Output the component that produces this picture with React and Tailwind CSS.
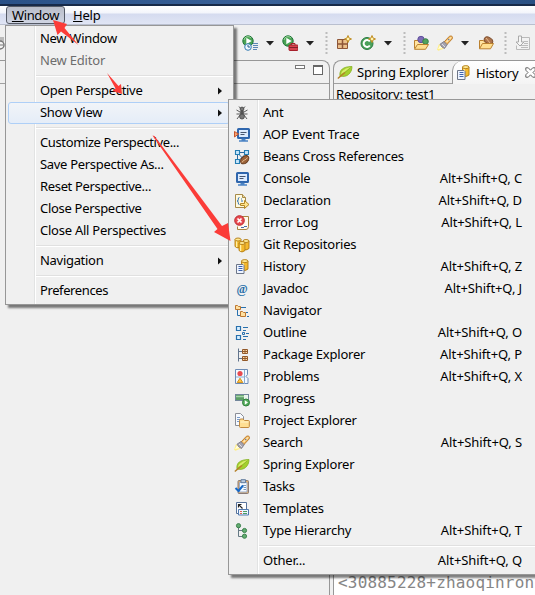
import React from "react";

const UI = "font-['Noto_Sans','Noto_Sans_CJK_SC',sans-serif] text-[13px] leading-[20px] tracking-[-0.2px] text-black";

function Svg({ children, w = 16, h = 16, className = "" }) {
  return (
    <svg width={w} height={h} viewBox={`0 0 ${w} ${h}`} className={`block shrink-0 ${className}`} fill="none">
      {children}
    </svg>
  );
}

function Cylinder({ x, y, w = 6, h = 9 }) {
  return (
    <g stroke="#b17a12" strokeWidth=".9">
      <path d={`M${x} ${y + 1.5}v${h - 3}q${w / 2} 3 ${w} 0v-${h - 3}z`} fill="#f5b92c" />
      <path d={`M${x + 1.6} ${y + 3}v${h - 4}`} stroke="#fff0a8" strokeWidth="1.3" />
      <ellipse cx={x + w / 2} cy={y + 1.5} rx={w / 2} ry="1.5" fill="#ffe993" />
    </g>
  );
}

function Leaf() {
  return (
    <Svg>
      <path d="M3 12C2 6 6 2.5 15 2.5 15 9 10 14 3 12Z" fill="#a4d02e" stroke="#86b326" strokeWidth=".8" />
      <path d="M4 10C5 6 9 4 14 3 11 6 7 8 4 10Z" fill="#d8ee6c" />
      <path d="M.8 14.5C3 12.500 5 11 8 8.500" stroke="#b5802a" strokeWidth="1.3" />
      <path d="M8 8.500 13.500 3.500" stroke="#86b326" strokeWidth=".8" />
    </Svg>
  );
}

function HistoryIcon() {
  return (
    <Svg>
      <Cylinder x={7.5} y={.6} w={6.5} h={11} />
      <path d="M2.5 5.5h6.500l1 1v8h-7.500z" fill="#eef4ff" stroke="#6d7688" />
      <path d="M4.500 7.500h4M4.500 9.500h4M4.500 11.500h4" stroke="#3c62ad" />
    </Svg>
  );
}

function Torch() {
  return (
    <Svg>
      <path d="M0 14.800 2 9l5 4.500-5.500 2.200z" fill="#ffee88" />
      <path d="M1 14 3 10.500 6 13z" fill="#fffce0" />
      <path d="m7 7 5.500-5.800q2-.6 2.700.4t-.2 2.500L9.500 10z" fill="#f5bd66" stroke="#bd7d2e" strokeWidth="1" />
      <path d="m9.500 7 4.700-4.700" stroke="#ffe9b8" strokeWidth="1.200" />
      <path d="M3 9.200 7 6.500l3.200 3.200L7.500 13.500q-3-1-4.500-4.300Z" fill="#a5a3ae" stroke="#777582" strokeWidth=".8" />
      <path d="m5 9 3 3" stroke="#dedee6" />
      <circle cx="11.700" cy="4.600" r=".8" fill="#7280a0" />
    </Svg>
  );
}

function Monitor({ ox = 0 }) {
  return (
    <g transform={`translate(${ox} 0)`}>
      <rect x="2" y="2" width="11" height="9" rx=".5" fill="#dcebff" stroke="#2f66ad" strokeWidth="2" />
      <path d="M4.500 5.500h6M4.500 7.500h4" stroke="#47566f" />
      <path d="M5.500 12.500h4M3 14h9" stroke="#4b83c4" strokeWidth="1.300" />
    </g>
  );
}

const icons = {
  ant: (
    <Svg>
      <g stroke="#4b4b4b" strokeWidth=".9">
        <path d="M5 1.500 7 4M11 1.500 9 4M2.500 5 6 7M13.500 5 10 7M2.500 9h11M3 14l3-4M13 14l-3-4" />
        <circle cx="8" cy="4" r="1.900" fill="#777" />
        <ellipse cx="8" cy="7.500" rx="1.600" ry="1.800" fill="#555" />
        <ellipse cx="8" cy="11.500" rx="2.400" ry="2.500" fill="#777" />
      </g>
    </Svg>
  ),
  aop: (
    <Svg>
      <Monitor ox={2} />
      <path d="M.5 4.500 4.500 7 .5 10z" fill="#f5a275" stroke="#c9562a" />
    </Svg>
  ),
  beans: (
    <Svg>
      <path d="M6 3.500h4M3.500 6v4M12.500 6v3M5.500 6l5 5M10.500 6l-5 5" stroke="#2e6a9e" />
      <g fill="#c7e6fb" stroke="#247db3" strokeWidth="1.100">
        <path d="M1.500 1.500h4v4h-4zM10.500 1.500h4v4h-4zM1.500 10.500h4v4h-4z" />
      </g>
      <ellipse cx="10.700" cy="10.700" rx="4.800" ry="3.300" transform="rotate(-45 10.700 10.700)" fill="#9b6238" stroke="#64391c" />
      <path d="M8 13.500c1-3 4-2 5.500-5" stroke="#e3b88c" />
    </Svg>
  ),
  console: (
    <Svg>
      <Monitor ox={1} />
    </Svg>
  ),
  declaration: (
    <Svg>
      <path d="M1.500 1.500h7l3 3v10h-10z" fill="#fff9df" stroke="#a68a49" />
      <path d="M8.500 1.500v3h3" fill="#ead59c" stroke="#a68a49" />
      <path d="M5.500 4.500q-1.500 0-1.200 1.700T3 8q1.500 0 1.300 1.800t1.200 1.700M7 8h2M7 6h1" stroke="#3574b5" />
      <path d="M6.500 10.500h4v-3l4.500 4-4.500 4v-3h-4z" fill="#ffe48c" stroke="#b38727" />
    </Svg>
  ),
  error: (
    <Svg>
      <path d="M8 1.500h6.500v10q0 3-2.500 3H3.500v-3" fill="#fffbed" stroke="#a98340" />
      <path d="M10 11.500h3M7 12.500h3" stroke="#476eae" />
      <circle cx="5.500" cy="5.500" r="4.800" fill="#e84b50" stroke="#ba2930" />
      <path d="m3.500 3.500 4 4m0-4-4 4" stroke="#fff" strokeWidth="1.700" />
    </Svg>
  ),
  git: (
    <Svg>
      <Cylinder x={1} y={1} w={6} h={10} />
      <Cylinder x={9} y={2.500} w={6} h={10.500} />
      <Cylinder x={5} y={4.500} w={6} h={10.500} />
    </Svg>
  ),
  history: <HistoryIcon />,
  javadoc: (
    <Svg>
      <text x="8" y="11.500" textAnchor="middle" fontSize="12" fontWeight="bold" fontFamily="Liberation Serif, serif" fill="#286fa9">@</text>
    </Svg>
  ),
  navigator: (
    <Svg>
      <path d="M3.500 6v6.500H6M7 4.500h5" stroke="#2870ad" />
      <path d="M9 4.500h3M12 9.500h2M13 13.500h2" stroke="#2870ad" strokeWidth="1.200" />
      <path d="M1.500 2.500h2l1 1h2v3h-5zM6.500 8.500h2l1 1h2v4h-5z" fill="#ffe0a0" stroke="#bd7730" />
    </Svg>
  ),
  outline: (
    <Svg>
      <path d="M2.500 1.500h4v4h-4zM2.500 10.500h4v4h-4z" fill="#d8efff" stroke="#2870ad" strokeWidth="1.200" />
      <path d="M9 2.500h5M9 5.500h3M9 11.500h5M9 14.500h3M12 8.500h3" stroke="#2870ad" strokeWidth="1.200" />
      <path d="M8.500 7.500h2v2h-2z" stroke="#2870ad" />
    </Svg>
  ),
  package: (
    <Svg>
      <path d="M4.500 1.500v13M4.500 4.500H8M4.500 11.500H8" stroke="#62748c" />
      <g fill="#fbd9a6" stroke="#925829">
        <path d="M8.500 2.500h5v4h-5zM8.500 9.500h5v4h-5zM11 2v5M8 4.500h6M11 9v5M8 11.500h6" />
      </g>
    </Svg>
  ),
  problems: (
    <Svg>
      <path d="M1.500.5h12v5l-1.500 2 2 2v5H1.500z" fill="#f4f9ff" stroke="#6c8bb5" />
      <path d="M10.500 1v14M2 8h8" stroke="#8bacd0" />
      <circle cx="6" cy="4.500" r="2.600" fill="#e94a4f" />
      <path d="m6 9.200 2.800 4.300H3.200z" fill="#ffc443" stroke="#d09121" />
    </Svg>
  ),
  progress: (
    <Svg>
      <rect x="1.500" y="3.500" width="13" height="6" fill="#e9f4eb" stroke="#72869b" />
      <path d="M2 4h8v5H2z" fill="#5b9e64" />
      <path d="M2 5.500h8" stroke="#a7d3a9" strokeWidth="1.500" />
      <circle cx="12" cy="11.500" r="3.500" fill="#53aa5b" stroke="#2f803b" />
      <path d="m10.800 9.200 3.200 2.300-3.200 2.300z" fill="#fff" />
    </Svg>
  ),
  project: (
    <Svg>
      <path d="M1.500.5h5l3 3v9h-8z" fill="#f7faff" stroke="#8b8e97" />
      <path d="M3 4.500h3M3 6.500h3M3 8.500h2" stroke="#799bca" />
      <path d="M5.500 7.500q0-1.500 1.500-1.500h2l1.500 1.500h4q.8 0 .8.800v5.200q0 1-1 1H6.500q-1 0-1-1z" fill="#ffdf93" stroke="#c28a3e" />
      <path d="M6.500 9h8" stroke="#fff4ca" />
    </Svg>
  ),
  search: <Torch />,
  spring: <Leaf />,
  tasks: (
    <Svg>
      <rect x="4" y="1.500" width="10.500" height="13" rx="1" fill="#dcae70" stroke="#8a7b77" />
      <path d="M5.500 3.500h7.500v9.500H5.500z" fill="#f6faff" stroke="#9babc7" />
      <path d="M7 .7h4.500v3H7z" fill="#b9cadf" stroke="#637d9d" />
      <path d="M8.500 6.500h3.500M9.500 8.500H12M9.500 10.500H12" stroke="#7998bb" />
      <path d="m1.500 9 3 3L9 6.500" stroke="#1668c7" strokeWidth="2" />
    </Svg>
  ),
  templates: (
    <Svg>
      <path d="M2.500 1.500h10v11h-10z" fill="#fff" stroke="#57729b" />
      <path d="M4.500 6.500V3.500h3M4.700 3.700l3.800 3.800" stroke="#222" strokeWidth="1.200" />
      <path d="M4.500 8.500h10v5.500h-10z" fill="#eef5ff" stroke="#5078ae" />
      <path d="M6 10.500h2M6 12.500h2" stroke="#e06150" />
      <path d="M9 10.500h4M9 12.500h4" stroke="#4b9d62" />
    </Svg>
  ),
  type: (
    <Svg>
      <path d="M4.500 4v9.500H10M4.500 7.500H10" stroke="#657984" />
      <g fill="#62ac70" stroke="#3c824d">
        <circle cx="4.500" cy="2.700" r="2.100" />
        <circle cx="10.500" cy="7.500" r="2.100" />
        <circle cx="10.500" cy="13.200" r="2.100" />
      </g>
    </Svg>
  ),
};

const views = [
  ["Ant", "ant", ""],
  ["AOP Event Trace", "aop", ""],
  ["Beans Cross References", "beans", ""],
  ["Console", "console", "Alt+Shift+Q, C"],
  ["Declaration", "declaration", "Alt+Shift+Q, D"],
  ["Error Log", "error", "Alt+Shift+Q, L"],
  ["Git Repositories", "git", ""],
  ["History", "history", "Alt+Shift+Q, Z"],
  ["Javadoc", "javadoc", "Alt+Shift+Q, J"],
  ["Navigator", "navigator", ""],
  ["Outline", "outline", "Alt+Shift+Q, O"],
  ["Package Explorer", "package", "Alt+Shift+Q, P"],
  ["Problems", "problems", "Alt+Shift+Q, X"],
  ["Progress", "progress", ""],
  ["Project Explorer", "project", ""],
  ["Search", "search", "Alt+Shift+Q, S"],
  ["Spring Explorer", "spring", ""],
  ["Tasks", "tasks", ""],
  ["Templates", "templates", ""],
  ["Type Hierarchy", "type", "Alt+Shift+Q, T"],
];

function MenuRow({ label, disabled, arrow, active, tracking = "tracking-[-0.3px]" }) {
  return (
    <div className={`ml-[2px] mr-[3px] flex h-[22px] items-center ${active ? "rounded-[3px] border border-[#aecff7] bg-gradient-to-b from-[#f1f4f8] to-[#e5edf8] pl-[31px] pr-[8px]" : "pl-[32px] pr-[9px]"} ${disabled ? "text-[#6d6d6d]" : ""}`}>
      <span className={`grow whitespace-nowrap pb-[2px] ${tracking}`}>{label}</span>
      {arrow && (
        <Svg w={4} h={8} className="mr-[-1px]">
          <path d="M0 .5 4 4 0 7.500z" fill="#111" />
        </Svg>
      )}
    </div>
  );
}

function Separator() {
  return (
    <div className="flex h-2 items-center pl-[30px]">
      <div className="h-[2px] grow border-t border-[#e0e0e0] bg-white" />
    </div>
  );
}

function WindowMenu() {
  return (
    <div className="absolute left-[5px] top-[25px] flex h-[280px] w-[229px] border border-[#979797] bg-[#f0f0f0] shadow-[3px_3px_2px_rgba(0,0,0,0.5)]">
      <div className="flex w-full flex-col bg-[linear-gradient(to_right,transparent_28px,#e2e3e3_28px,#e2e3e3_29px,#fff_29px,#fff_30px,transparent_30px)] pt-[2px]">
        <MenuRow label="New Window" />
        <MenuRow label="New Editor" disabled tracking="tracking-[-0.2px]" />
        <Separator />
        <MenuRow label="Open Perspective" arrow />
        <MenuRow label="Show View" arrow active />
        <Separator />
        <MenuRow label="Customize Perspective..." tracking="tracking-[-0.38px]" />
        <MenuRow label="Save Perspective As..." tracking="tracking-[-0.31px]" />
        <MenuRow label="Reset Perspective..." tracking="tracking-[-0.34px]" />
        <MenuRow label="Close Perspective" />
        <MenuRow label="Close All Perspectives" tracking="tracking-[-0.24px]" />
        <Separator />
        <MenuRow label="Navigation" arrow />
        <Separator />
        <MenuRow label="Preferences" tracking="tracking-[-0.4px]" />
      </div>
    </div>
  );
}

function ViewRow({ label, icon, shortcut }) {
  return (
    <div className="flex h-[22px] items-center pl-[5px] pr-[13px]">
      <div className="w-[29px] shrink-0">{icon}</div>
      <span className="grow whitespace-nowrap pb-[2px]">{label}</span>
      <span className="whitespace-nowrap pb-[2px] tracking-[-0.1px]">{shortcut}</span>
    </div>
  );
}

function ViewMenu() {
  return (
    <div className="absolute left-[228px] top-[99px] h-[476px] w-[307px] border-y border-l border-[#979797] bg-[#f0f0f0] shadow-[3px_3px_2px_rgba(0,0,0,0.5)]">
      <div className="flex h-full flex-col bg-[linear-gradient(to_right,transparent_28px,#e2e3e3_28px,#e2e3e3_29px,#fff_29px,#fff_30px,transparent_30px)] pt-[2px]">
        {views.map(([label, icon, shortcut]) => (
          <ViewRow key={label} label={label} icon={icons[icon]} shortcut={shortcut} />
        ))}
        <Separator />
        <ViewRow label="Other..." shortcut="Alt+Shift+Q, Q" />
      </div>
    </div>
  );
}

function Caret() {
  return (
    <Svg w={8} h={5} className="mt-[6px]">
      <path d="M0 0h8L4 4.500z" fill="#222" />
    </Svg>
  );
}

function Grip() {
  return (
    <Svg w={3} h={22} className="mt-[-3px]">
      <path d="M1.500 0v22" stroke="#bcbcbc" strokeWidth="2" strokeDasharray="2 2" />
    </Svg>
  );
}

function RunBall() {
  return (
    <g>
      <circle cx="6" cy="6" r="5.200" fill="#49a254" stroke="#22763a" />
      <path d="M2 5a4 4 0 0 1 7-2" stroke="#9bd49b" />
      <path d="m4.300 2.700 5.400 3.300-5.400 3.300z" fill="#fff" />
    </g>
  );
}

function Sparkle() {
  return <path d="m12 .5 1 2.500 2.500 1-2.500 1-1 2.500L11 5 8.500 4 11 3z" fill="#fff3b0" stroke="#c08c22" />;
}

function OpenFolder({ children }) {
  return (
    <Svg>
      <path d="M1.500 13.500v-8h4l1 1.500h6v3" fill="#ffe4a2" stroke="#bb812f" />
      {children}
      <path d="M1.500 13.800 4.500 8.500h11l-3 5.300z" fill="#ffdf90" stroke="#bb812f" />
    </Svg>
  );
}

function Toolbar() {
  return (
    <div className="flex h-[35px] shrink-0 items-start bg-[#f0f0f0] pt-[10px]">
      <Svg w={5} h={16}>
        <path d="M0 2h4v5H0z" fill="#bababa" />
        <circle cx="0" cy="10" r="4" fill="#f3f3f3" stroke="#777" strokeWidth="1.500" />
        <path d="M0 10h3" stroke="#777" />
      </Svg>
      <div className="ml-[237px] flex w-[32px] justify-between">
        <Svg>
          <RunBall />
          <circle cx="6" cy="12" r="3.300" fill="#edf6ff" stroke="#347bb1" />
          <path d="M6 10v2h2" stroke="#275d88" />
          <path d="M11 8.500h5M11 10.500h5M11 12.500h5M11 14.500h4" stroke="#5d86b4" />
        </Svg>
        <Caret />
      </div>
      <div className="ml-[8px] flex w-[32px] justify-between">
        <Svg>
          <RunBall />
          <path d="M9 10V8.500h4V10" stroke="#a7202b" />
          <rect x="7" y="10" width="9" height="5.500" rx=".7" fill="#d54550" stroke="#a7202b" />
          <path d="M7 12.500h9" stroke="#84202a" />
        </Svg>
        <Caret />
      </div>
      <div className="ml-[11px]"><Grip /></div>
      <Svg className="ml-[8px]">
        <path d="M1.500 4.500h10v9h-10z" fill="#ecc18c" stroke="#8e5638" />
        <path d="M6.500 4v10M1 9h11" stroke="#8e5638" strokeWidth="1.500" />
        <Sparkle />
      </Svg>
      <div className="ml-[8px] flex w-[32px] justify-between">
        <Svg>
          <circle cx="7" cy="8.500" r="6" fill="#4aa15b" stroke="#2b7b41" />
          <path d="M9.800 6.500a3.400 3.400 0 1 0 0 4" stroke="#fff" strokeWidth="2" />
          <Sparkle />
        </Svg>
        <Caret />
      </div>
      <div className="ml-[11px]"><Grip /></div>
      <Svg className="ml-[7px]">
        <path d="M1.500 13.500v-8h4l1 1.500h6v3" fill="#ffe4a2" stroke="#bb812f" />
        <circle cx="8" cy="4.500" r="3.200" fill="#7d6cb5" stroke="#61509e" />
        <circle cx="12.500" cy="6.500" r="2.800" fill="#51a25d" stroke="#377e49" />
        <path d="M1.500 14.300 4.500 9.500h11l-3 4.800z" fill="#ffdf90" stroke="#bb812f" />
      </Svg>
      <div className="ml-[8px] flex w-[32px] justify-between">
        <Torch />
        <Caret />
      </div>
      <div className="ml-[9px]">
        <OpenFolder>
          <ellipse cx="10.500" cy="5.500" rx="4.500" ry="3" transform="rotate(30 10.500 5.500)" fill="#ae744b" stroke="#80502f" />
          <path d="m8 3 4 5" stroke="#e6ba8b" />
        </OpenFolder>
      </div>
      <div className="ml-[10px]"><Grip /></div>
      <Svg className="ml-[8px]">
        <path d="M5.500 2.500h9v12h-13v-4" fill="#f2f2f2" stroke="#bababa" />
        <path d="M9 6.500h4M9 8.500h4M6 10.500h7M6 12.500h7" stroke="#bcbcbc" />
        <path d="M3.500 1h3v6H9L5 11 1 7h2.500z" fill="#f6f6f6" stroke="#aaa" />
      </Svg>
    </div>
  );
}

function Panes() {
  return (
    <div className="flex grow">
      <div className="flex w-[330px] shrink-0 flex-col rounded-tr-[8px] border-r border-t border-[#979797]">
        <div className="flex h-[23px] items-start justify-end gap-[8px] border-b border-[#a0a0a0] pr-[6px] pt-[4px]">
          <div className="h-[4px] w-[10px] border border-[#777] bg-white" />
          <div className="h-[10px] w-[10px] border border-t-[2px] border-[#666] bg-white" />
        </div>
      </div>
      <div className="ml-[3px] flex grow flex-col overflow-hidden rounded-tl-[8px] border-l border-t border-[#979797]">
        <div className="flex h-[23px] shrink-0">
          <div className="flex w-[118px] shrink-0 items-center border-b border-[#a0a0a0] pl-[3px]">
            <Leaf />
            <span className="ml-[4px] whitespace-nowrap">Spring Explorer</span>
          </div>
          <div className="flex w-[84px] shrink-0 items-center rounded-tl-[10px] border-l border-[#979797] bg-gradient-to-b from-white to-[#f4f4f4] pl-[2px]">
            <HistoryIcon />
            <span className="ml-[5px] whitespace-nowrap">History</span>
            <Svg w={11} h={11} className="ml-[7px]">
              <path d="M.8.8h2.500l2.200 2.400L7.700.8h2.500v2.400L8 5.500l2.200 2.300v2.400H7.700L5.500 7.800l-2.200 2.400H.8V7.800L3 5.500.8 3.200z" fill="#fff" stroke="#666" />
            </Svg>
          </div>
        </div>
        <div className="h-[60px] shrink-0 pl-[2px]">Repository: test1</div>
        <div className="flex grow items-end bg-white pb-[2px] pl-[4px] font-['DejaVu_Sans_Mono',monospace] text-[16px] leading-[20px] tracking-[0.18px] text-[#868686]">
          &lt;30885228+zhaoqinron
        </div>
      </div>
    </div>
  );
}

export default function App() {
  return (
    <div className={`relative flex h-[595px] w-[535px] flex-col overflow-hidden bg-[#f0f0f0] ${UI}`}>
      <div className="h-[6px] shrink-0 border-b-2 border-[#172a49] bg-gradient-to-r from-[#2a5187] via-[#3a6299] to-[#2a5083]" />
      <div className="flex h-[19px] shrink-0 items-center border-b border-[#b9bfcf] bg-[linear-gradient(to_bottom,#fff_0,#f3f5fb_7px,#d5dbef_8px,#e0e5f5_100%)]">
        <div className="ml-[6px] flex h-[18px] w-[59px] items-center justify-center rounded-[3px] border border-[#555a66] bg-gradient-to-b from-[#b9bdc9] to-[#cfd4e2]">
          <span className="tracking-[-0.35px]"><u className="underline-offset-1">W</u>indow</span>
        </div>
        <span className="ml-[8px]"><u className="underline-offset-1">H</u>elp</span>
      </div>
      <Toolbar />
      <Panes />
      <WindowMenu />
      <ViewMenu />
      <svg className="pointer-events-none absolute inset-0" width="535" height="595" viewBox="0 0 535 595" fill="#fb3c38">
        <path d="M53 20 67 24 64.500 28 78.500 45 61 31.500 57.500 35z" />
        <path d="M107 73 118.500 86 121 84 122 94 112.500 91 115.500 88.500z" />
        <path d="M152.500 135.500 154.500 136 222 226 228 223 230.500 241 214 232 217.500 229z" />
      </svg>
    </div>
  );
}
